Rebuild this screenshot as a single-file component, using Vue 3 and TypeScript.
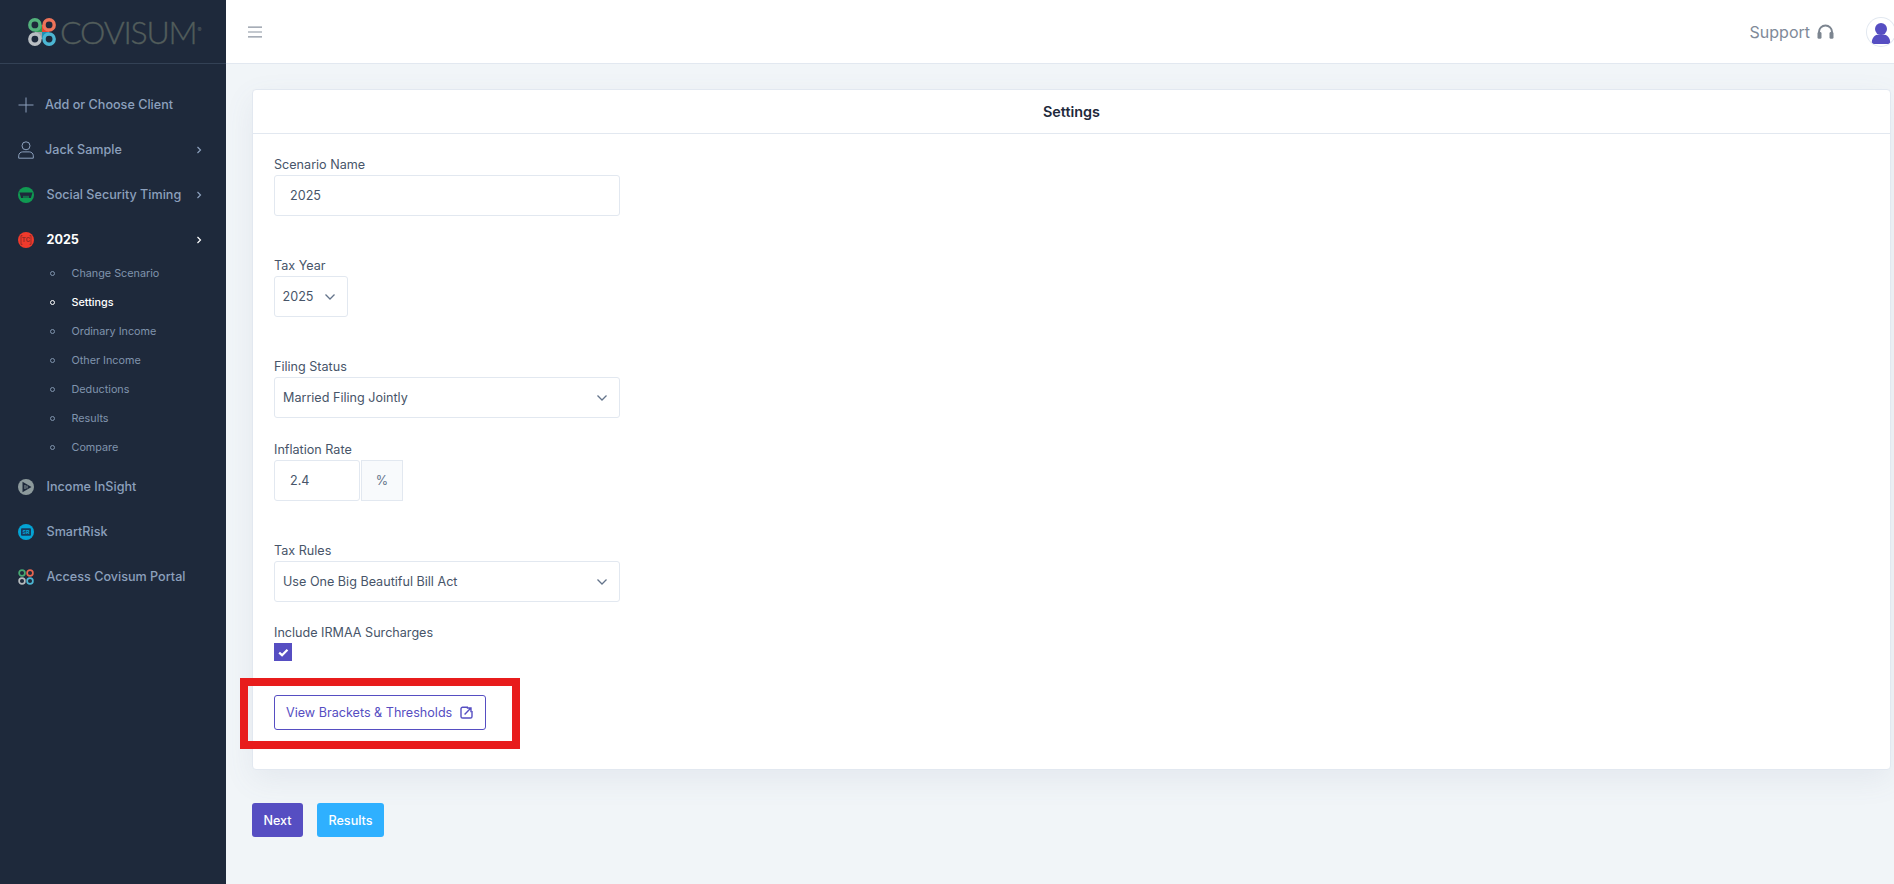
<template>
  <div class="layout">
    <aside class="sidebar">
      <div class="brand">
        <svg class="brand-mark" viewBox="0 0 28 28" width="28" height="28">
          <rect x="7" y="7" width="7" height="7" fill="#2e9a55" />
          <rect x="14" y="7" width="7" height="7" fill="#e8452f" />
          <rect x="7" y="14" width="7" height="7" fill="#9ca3a8" />
          <rect x="14" y="14" width="7" height="7" fill="#1f8fb5" />
          <circle cx="6.9" cy="6.9" r="5.1" fill="#1e293b" stroke="#53b27c" stroke-width="3.4" />
          <circle cx="21.1" cy="6.9" r="5.1" fill="#1e293b" stroke="#ee7359" stroke-width="3.4" />
          <circle cx="6.9" cy="21.1" r="5.1" fill="#1e293b" stroke="#b9bec2" stroke-width="3.4" />
          <circle cx="21.1" cy="21.1" r="5.1" fill="#1e293b" stroke="#4cb6d3" stroke-width="3.4" />
        </svg>
        <span class="brand-name">COVISUM</span><span class="brand-reg">®</span>
      </div>

      <nav class="nav">
        <template v-for="item in navItems" :key="item.label">
          <div class="nav-item" :class="{ active: item.active, wide: item.wide }">
            <span class="nav-icon">
              <svg v-if="item.icon === 'plus'" viewBox="0 0 16 16" width="16" height="16" fill="none" stroke="#8ca0bd" stroke-width="1">
                <path d="M8 0.5v15M0.5 8h15" />
              </svg>
              <svg v-else-if="item.icon === 'user'" viewBox="0 0 16 18" width="16" height="18" fill="none" stroke="#8ca0bd" stroke-width="1">
                <circle cx="8" cy="4.8" r="4" />
                <path d="M0.7 17.2v-2.4c0-2.4 2-3.9 4-3.9h6.6c2 0 4 1.5 4 3.9v2.4z" />
              </svg>
              <svg v-else-if="item.icon === 'ss'" viewBox="0 0 16 16" width="16" height="16">
                <circle cx="8" cy="8" r="8" fill="#109a52" />
                <path d="M1.5 5.5h13l-1.6 5.5H3.1z" fill="#1e293b" />
                <path d="M5 8.8h6v2.2H5z" fill="#109a52" opacity=".6" />
              </svg>
              <svg v-else-if="item.icon === 'tc'" viewBox="0 0 16 16" width="16" height="16">
                <circle cx="8" cy="8" r="8" fill="#ee3a2c" />
                <path d="M4.4 3.6H3v8.8h1.4M11.6 3.6H13v8.8h-1.4" fill="none" stroke="#8f2a26" stroke-width=".9" />
                <text x="8" y="10.2" text-anchor="middle" class="tiny-tc">TC</text>
              </svg>
              <svg v-else-if="item.icon === 'insight'" viewBox="0 0 16 16" width="16" height="16">
                <circle cx="8" cy="8" r="8" fill="#8d9a9c" />
                <path d="M4.5 2.8l9 5.2-9 5.2z" fill="#1e293b" />
                <path d="M7 6v4M9 6.6v2.8" stroke="#8d9a9c" stroke-width="1" />
              </svg>
              <svg v-else-if="item.icon === 'risk'" viewBox="0 0 16 16" width="16" height="16">
                <circle cx="8" cy="8" r="8" fill="#04a3d4" />
                <rect x="3" y="4.2" width="10" height="7.6" rx="1" fill="#173a5c" />
                <text x="8" y="10" text-anchor="middle" class="tiny-sr">SR</text>
              </svg>
              <svg v-else viewBox="0 0 16 16" width="16" height="16" fill="none" stroke-width="1.7">
                <circle cx="4" cy="4" r="2.9" stroke="#47a772" />
                <circle cx="12" cy="4" r="2.9" stroke="#e8664f" />
                <circle cx="4" cy="12" r="2.9" stroke="#b5babd" />
                <circle cx="12" cy="12" r="2.9" stroke="#4cb6d3" />
              </svg>
            </span>
            <span class="nav-label">{{ item.label }}</span>
            <svg v-if="item.chevron" class="nav-chevron" viewBox="0 0 6 8" width="6" height="8" fill="none" stroke="currentColor" stroke-width="1.2">
              <path d="M1.5 1l3 3-3 3" />
            </svg>
          </div>
          <ul v-if="item.children" class="subnav">
            <li v-for="child in item.children" :key="child" :class="{ current: child === 'Settings' }">
              <span class="bullet"></span>{{ child }}
            </li>
          </ul>
        </template>
      </nav>
    </aside>

    <div class="content">
      <header class="topbar">
        <svg class="menu-icon" viewBox="0 0 14 12" width="14" height="12" fill="none" stroke="#8a93a0" stroke-width="1.2">
          <path d="M0 1.2h14M0 6h14M0 10.8h14" />
        </svg>
        <div class="topbar-right">
          <span class="support">Support</span>
          <svg class="headset" viewBox="0 0 17 15" width="17" height="15">
            <path d="M2 9V8a6.5 6.5 0 0 1 13 0v1" fill="none" stroke="#7c8590" stroke-width="2" />
            <rect x="0.5" y="8" width="4" height="6.8" rx="1.4" fill="#7c8590" />
            <rect x="12.5" y="8" width="4" height="6.8" rx="1.4" fill="#7c8590" />
          </svg>
          <span class="avatar">
            <svg viewBox="0 0 28 28" width="28" height="28">
              <circle cx="14" cy="11" r="6" fill="#564ec2" />
              <path d="M4.8 26v-1.4c0-4.6 3.2-8 7-8h4.4c3.8 0 7 3.4 7 8V26z" fill="#564ec2" />
            </svg>
          </span>
        </div>
      </header>

      <main class="page">
        <section class="card">
          <h2 class="card-title">Settings</h2>
          <div class="card-body">
            <div class="field gap-lg">
              <label>Scenario Name</label>
              <div class="control wide input-text">2025</div>
            </div>

            <div class="field gap-lg">
              <label>Tax Year</label>
              <div class="control select year">
                <span>2025</span>
                <svg class="caret" viewBox="0 0 12 8" width="12" height="8" fill="none" stroke="#64748b" stroke-width="1.3"><path d="M1.5 1.5L6 6l4.5-4.5" /></svg>
              </div>
            </div>

            <div class="field gap-sm">
              <label>Filing Status</label>
              <div class="control select wide">
                <span>Married Filing Jointly</span>
                <svg class="caret" viewBox="0 0 12 8" width="12" height="8" fill="none" stroke="#64748b" stroke-width="1.3"><path d="M1.5 1.5L6 6l4.5-4.5" /></svg>
              </div>
            </div>

            <div class="field gap-lg">
              <label>Inflation Rate</label>
              <div class="input-group">
                <div class="control input-text rate">2.4</div>
                <div class="addon">%</div>
              </div>
            </div>

            <div class="field gap-sm">
              <label>Tax Rules</label>
              <div class="control select wide">
                <span>Use One Big Beautiful Bill Act</span>
                <svg class="caret" viewBox="0 0 12 8" width="12" height="8" fill="none" stroke="#64748b" stroke-width="1.3"><path d="M1.5 1.5L6 6l4.5-4.5" /></svg>
              </div>
            </div>

            <div class="field check-field">
              <label>Include IRMAA Surcharges</label>
              <span class="checkbox">
                <svg viewBox="0 0 12 10" width="11" height="9" fill="none" stroke="#fff" stroke-width="2.5"><path d="M1.2 5.2L4.4 8l6-6" /></svg>
              </span>
            </div>

            <button class="btn-outline" type="button">
              View Brackets &amp; Thresholds
              <svg viewBox="0 0 13 13" width="13" height="13" fill="none" stroke="#564ec2" stroke-width="1.4">
                <path d="M8 1.2H2.6A1.6 1.6 0 0 0 1 2.8v7.6A1.6 1.6 0 0 0 2.6 12h7.8a1.6 1.6 0 0 0 1.6-1.6V5" />
                <path d="M4.6 8.4L10.4 2.6M6.8 2h4.2v4.2" />
              </svg>
              <span class="highlight"></span>
            </button>
          </div>
        </section>

        <div class="actions">
          <button class="btn next" type="button">Next</button>
          <button class="btn results" type="button">Results</button>
        </div>
      </main>
    </div>
  </div>
</template>

<script setup lang="ts">
interface NavItem {
  label: string
  icon: string
  chevron?: boolean
  active?: boolean
  wide?: boolean
  children?: string[]
}

const navItems: NavItem[] = [
  { label: 'Add or Choose Client', icon: 'plus', wide: true },
  { label: 'Jack Sample', icon: 'user', chevron: true, wide: true },
  { label: 'Social Security Timing', icon: 'ss', chevron: true },
  {
    label: '2025',
    icon: 'tc',
    chevron: true,
    active: true,
    children: ['Change Scenario', 'Settings', 'Ordinary Income', 'Other Income', 'Deductions', 'Results', 'Compare']
  },
  { label: 'Income InSight', icon: 'insight' },
  { label: 'SmartRisk', icon: 'risk' },
  { label: 'Access Covisum Portal', icon: 'portal' }
]
</script>

<style>
html,
body {
  margin: 0;
  overflow: hidden;
}
</style>

<style scoped>
.layout {
  display: flex;
  height: 884px;
  overflow: hidden;
  font-family: Inter, "Liberation Sans", sans-serif;
  background: #f1f5f8;
  color: #475569;
}

/* sidebar */
.sidebar {
  width: 226px;
  flex: none;
  background: #1e293b;
}

.brand {
  height: 63px;
  border-bottom: 1px solid #334155;
  display: flex;
  align-items: center;
  padding-left: 28px;
}

.brand-mark {
  flex: none;
}

.brand-name {
  font-family: Lato, sans-serif;
  font-weight: 300;
  font-size: 32px;
  line-height: 1;
  color: #525d5b;
  -webkit-text-stroke: 0.35px #525d5b;
  margin-left: 4px;
  letter-spacing: -1.2px;
}

.brand-reg {
  font-size: 6px;
  color: #5a6563;
  align-self: flex-start;
  margin-top: 26px;
  margin-left: 1px;
}

.nav {
  padding-top: 18px;
}

.nav-item {
  height: 45px;
  display: flex;
  align-items: center;
  padding: 0 24px 0 18px;
  font-size: 12.6px;
  font-weight: 500;
  color: #8ca0bd;
}

.nav-item.active {
  color: #fff;
  font-weight: 700;
}

.nav-icon {
  width: 16px;
  height: 18px;
  display: flex;
  align-items: center;
  justify-content: center;
  margin-right: 12.5px;
}

.nav-item.wide .nav-icon {
  margin-right: 11px;
}

.tiny-tc {
  font: 700 6px Inter, sans-serif;
  fill: #8f2a26;
}

.tiny-sr {
  font: 700 5.4px Inter, sans-serif;
  fill: #04a3d4;
}

.nav-label {
  flex: 1;
}

.nav-chevron {
  flex: none;
}

.subnav {
  list-style: none;
  margin: -3px 0 2px;
  padding: 0;
}

.subnav li {
  height: 29px;
  display: flex;
  align-items: center;
  padding-left: 50px;
  font-size: 10.8px;
  color: #8094ad;
}

.subnav li.current {
  color: #fff;
  font-weight: 500;
}

.bullet {
  width: 5px;
  height: 5px;
  border: 1px solid currentColor;
  border-radius: 50%;
  box-sizing: border-box;
  margin-right: 16.5px;
}

/* top bar */
.content {
  flex: 1;
  min-width: 0;
  display: flex;
  flex-direction: column;
}

.topbar {
  height: 63px;
  flex: none;
  background: #fff;
  border-bottom: 1px solid #e2e8f0;
  display: flex;
  align-items: center;
  justify-content: space-between;
  padding-left: 22px;
}

.topbar-right {
  display: flex;
  align-items: center;
  margin-right: -1px;
}

.support {
  font-size: 16px;
  color: #7f8a99;
}

.headset {
  margin-left: 7px;
}

.avatar {
  width: 28px;
  height: 28px;
  margin-left: 33px;
  border-radius: 50%;
  box-shadow: 0 0 0 1px #e2e8f0;
  overflow: hidden;
  display: block;
}

/* page */
.page {
  flex: 1;
  padding: 25px 3px 0 26px;
}

.card {
  background: #fff;
  border: 1px solid #e2e8f0;
  border-radius: 4px;
  box-shadow: 0 10px 30px rgba(100, 116, 139, 0.09);
}

.card-title {
  margin: 0;
  height: 43px;
  line-height: 43px;
  text-align: center;
  font-size: 14.4px;
  font-weight: 600;
  color: #1e293b;
  border-bottom: 1px solid #e2e8f0;
}

.card-body {
  padding: 21px 21px 39px;
}

.field label {
  display: block;
  font-size: 12.6px;
  line-height: 20px;
  color: #475569;
}

.gap-lg {
  margin-bottom: 40px;
}

.gap-sm {
  margin-bottom: 22px;
}

.control {
  height: 41px;
  box-sizing: border-box;
  border: 1px solid #e2e8f0;
  border-radius: 3px;
  background: #fff;
  font-size: 12.6px;
  display: flex;
  align-items: center;
  color: #475569;
}

.control.wide {
  width: 346px;
}

.input-text {
  padding-left: 15px;
}

.select {
  padding: 0 11px 0 8px;
  justify-content: space-between;
}

.select.year {
  width: 74px;
  padding-left: 7.5px;
}

.input-group {
  display: flex;
  gap: 1px;
}

.rate {
  width: 86px;
}

.addon {
  width: 42px;
  height: 41px;
  box-sizing: border-box;
  border: 1px solid #e2e8f0;
  background: #f8fafc;
  display: flex;
  align-items: center;
  justify-content: center;
  font-size: 12.6px;
  color: #64748b;
}

.check-field {
  margin-top: -1px;
  margin-bottom: 34px;
}

.checkbox {
  width: 18px;
  height: 18px;
  background: #564ec2;
  display: flex;
  align-items: center;
  justify-content: center;
}

.btn-outline {
  position: relative;
  height: 35px;
  width: 212px;
  display: flex;
  align-items: center;
  gap: 8px;
  padding: 0 11px;
  box-sizing: border-box;
  background: #fff;
  border: 1px solid #564ec2;
  border-radius: 3px;
  font: 400 12.6px Inter, sans-serif;
  color: #564ec2;
  white-space: nowrap;
}

/* annotation drawn over the screenshot */
.highlight {
  position: absolute;
  left: -35px;
  top: -18px;
  width: 280px;
  height: 71px;
  box-sizing: border-box;
  border: 8px solid #e81c1c;
  pointer-events: none;
}

.actions {
  display: flex;
  gap: 14px;
  margin-top: 33px;
}

.btn {
  height: 34px;
  border: 0;
  border-radius: 3px;
  color: #fff;
  font: 500 12.6px Inter, sans-serif;
  padding: 0;
}

.next {
  width: 51px;
  background: #564ec2;
}

.results {
  width: 67px;
  background: #2fb0ff;
}
</style>
